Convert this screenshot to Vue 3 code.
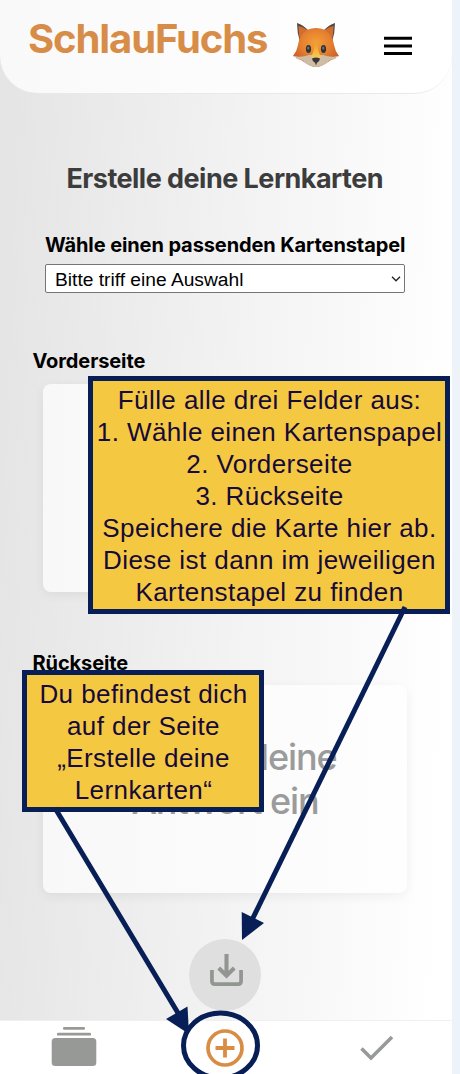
<script setup>
const saveSteps = [
  'Fülle alle drei Felder aus:',
  '1. Wähle einen Kartenspapel',
  '2. Vorderseite',
  '3. Rückseite',
  'Speichere die Karte hier ab.',
  'Diese ist dann im jeweiligen',
  'Kartenstapel zu finden'
]
const pageInfo = ['Du befindest dich', 'auf der Seite', '„Erstelle deine', 'Lernkarten“']
</script>

<template>
  <div class="screen">
    <div class="app">
      <header class="header">
        <span class="brand">SchlauFuchs</span>
        <svg class="fox" viewBox="0 0 48 46">
          <defs>
            <radialGradient id="fur" cx="50%" cy="38%" r="58%">
              <stop offset="0" stop-color="#f3a038" />
              <stop offset="0.55" stop-color="#e5802f" />
              <stop offset="1" stop-color="#cb5c29" />
            </radialGradient>
            <linearGradient id="snout" x1="0" y1="0" x2="0" y2="1">
              <stop offset="0" stop-color="#f29a30" />
              <stop offset="0.6" stop-color="#f5bd3e" />
              <stop offset="1" stop-color="#eed28c" />
            </linearGradient>
          </defs>
          <path d="M5 1Q10 2 17 9L8 20Q5 11 5 1ZM43 1Q38 2 31 9L40 20Q43 11 43 1Z" fill="#4d4b47" />
          <path d="M6.5 4Q12 5 18 10L9 21Q6.5 14 6.5 4ZM41.5 4Q36 5 30 10L39 21Q41.5 14 41.5 4Z" fill="#d26c2f" />
          <path d="M15 8Q24 4 33 8Q41 13 42 23Q43 29 47 34L43 35L44 36L39 38L36 40Q29 45 24 45Q19 45 12 40L9 38L4 36L5 35L1 34Q5 29 6 23Q7 13 15 8Z" fill="url(#fur)" />
          <path d="M1 34Q9 36 17 33H31Q39 36 47 34L44 35.5L43 37L38 38Q31 45 24 45Q17 45 10 38L5 37L4 35.5Z" fill="#cdbda6" />
          <path d="M23 21H25Q26 30 29 35Q26 38 24 38Q22 38 19 35Q22 30 23 21Z" fill="url(#snout)" />
          <ellipse cx="16.5" cy="27" rx="2.6" ry="4.1" fill="#2f3237" />
          <ellipse cx="31.5" cy="27" rx="2.6" ry="4.1" fill="#2f3237" />
          <ellipse cx="16.3" cy="26" rx="1.1" ry="1.6" fill="#64788a" />
          <ellipse cx="31.3" cy="26" rx="1.1" ry="1.6" fill="#64788a" />
          <path d="M20 36.5Q24 34.5 28 36.5Q28 39 24.7 41V42.5H23.3V41Q20 39 20 36.5Z" fill="#3c3531" />
        </svg>
        <svg class="menu" viewBox="0 0 28 20">
          <path d="M0 2.2H28M0 10H28M0 17.5H28" stroke="#000" stroke-width="3" />
        </svg>
      </header>

      <main class="content">
        <h1 class="title">Erstelle deine Lernkarten</h1>
        <label class="label stack-label">Wähle einen passenden Kartenstapel</label>
        <div class="select">
          <span>Bitte triff eine Auswahl</span>
          <svg viewBox="0 0 10 6"><path d="M1 .8L5 4.8L9 .8" fill="none" stroke="#222" stroke-width="1.3" /></svg>
        </div>
        <label class="label front-label">Vorderseite</label>
        <div class="card"></div>
        <label class="label back-label">Rückseite</label>
        <div class="card back">
          <span>Gib hier deine</span>
          <span>Antwort ein</span>
        </div>
        <button class="save">
          <svg viewBox="0 0 34 34">
            <path d="M2 16.5V28Q2 31 5 31H29Q32 31 32 28V16.5" fill="none" stroke="#919691" stroke-width="3.8" />
            <path d="M17 0V22M9 14.5L17 22.3L25 14.5" fill="none" stroke="#919691" stroke-width="4.2" />
          </svg>
        </button>
      </main>

      <nav class="nav">
        <svg class="deck" viewBox="0 0 46 40">
          <rect x="12" y="0" width="22" height="2.8" rx="1.2" fill="#999a97" />
          <rect x="6" y="5.8" width="34" height="2.8" rx="1.2" fill="#999a97" />
          <rect x=".7" y="11" width="44.6" height="28" rx="3.5" fill="#979996" />
        </svg>
        <svg class="plus" viewBox="0 0 38 38">
          <circle cx="19" cy="19" r="17" fill="none" stroke="#d98d44" stroke-width="3.7" />
          <path d="M19 9.5V28.5M9.5 19H28.5" stroke="#d98d44" stroke-width="3.8" />
        </svg>
        <svg class="check" viewBox="0 0 34 26">
          <path d="M1.5 13.5L11 23L32 2" fill="none" stroke="#979b97" stroke-width="3.6" />
        </svg>
      </nav>
    </div>

    <div class="note note-save">
      <div v-for="line in saveSteps" :key="line">{{ line }}</div>
    </div>
    <div class="note note-page">
      <div v-for="line in pageInfo" :key="line">{{ line }}</div>
    </div>

    <svg class="arrows" viewBox="0 0 460 1074">
      <g stroke="#071e56" stroke-width="5" fill="none">
        <path d="M405 607L250 924" />
        <path d="M55 808L178 1013" />
        <ellipse cx="220.5" cy="1045.5" rx="37" ry="32.5" />
      </g>
      <path d="M242 940L241.7 912L264 923Z" fill="#071e56" />
      <path d="M189 1034L166 1019L187.5 1006.5Z" fill="#071e56" />
    </svg>
  </div>
</template>

<style>
body { background: #edf3f8; }
</style>

<style scoped>
.screen {
  position: relative;
  width: 460px;
  height: 1074px;
  overflow: hidden;
  background: #edf3f8;
  font-family: Inter, "Liberation Sans", sans-serif;
}
.app {
  display: flex;
  flex-direction: column;
  width: 452px;
  height: 1074px;
  background: linear-gradient(92deg, #e5e5e5 3%, #fff 96%);
}
.header {
  box-sizing: border-box;
  flex: none;
  display: flex;
  align-items: flex-start;
  height: 94px;
  padding-left: 28px;
  border-bottom: 1px solid #e9e9e9;
  border-radius: 0 0 38px 38px;
  background: linear-gradient(90deg, #f9f9f9, #fff 85%);
}
.brand {
  width: 240px;
  margin-top: 15px;
  color: #d78d48;
  font-size: 40px;
  line-height: 48px;
  font-weight: 700;
  letter-spacing: -1.1px;
  white-space: nowrap;
}
.fox { width: 48px; height: 46px; margin: 22px 0 0 24px; }
.menu { width: 28px; height: 20px; margin: 36px 0 0 44px; }
.content {
  flex: 1;
  display: flex;
  flex-direction: column;
  align-items: flex-start;
  white-space: nowrap;
}
.title {
  margin: 68px 0 0 66.5px;
  color: #3c3c3c;
  font-size: 27px;
  line-height: 34px;
  font-weight: 700;
  letter-spacing: -0.53px;
}
.label { font-size: 20px; line-height: 24px; font-weight: 700; color: #000; letter-spacing: -0.1px; }
.stack-label { margin: 37px 0 0 45px; }
.select {
  box-sizing: border-box;
  display: flex;
  align-items: center;
  justify-content: space-between;
  width: 360px;
  height: 29px;
  margin: 7px 0 0 45px;
  padding: 2px 3px 0 9px;
  border: 1px solid #757575;
  border-radius: 2px;
  background: #fff;
  color: #000;
  font: 19.2px "Liberation Sans", sans-serif;
}
.select svg { width: 10px; height: 6px; margin-bottom: 2px; }
.front-label { margin: 56px 0 0 32.5px; }
.card {
  flex: none;
  width: 364px;
  height: 208px;
  margin: 11px 0 0 43px;
  border-radius: 8px;
  background: linear-gradient(90deg, #f8f8f8, #fefefe);
  box-shadow: 0 3px 12px rgba(0, 0, 0, 0.06);
}
.back-label { margin: 59px 0 0 32.5px; }
.back {
  box-sizing: border-box;
  display: flex;
  flex-direction: column;
  align-items: center;
  margin-top: 10px;
  padding-top: 50px;
  color: #9b9b9b;
  font-size: 36px;
  line-height: 44px;
  font-weight: 500;
  letter-spacing: -1.1px;
}
.save {
  display: flex;
  justify-content: center;
  width: 72px;
  height: 72px;
  margin: 46px 0 0 189px;
  padding: 15px 0 0 3px;
  border: 0;
  border-radius: 50%;
  background: #dfdfdf;
}
.save svg { width: 33px; height: 33px; }
.nav {
  box-sizing: border-box;
  flex: none;
  display: flex;
  height: 54px;
  border-top: 1px solid #f0f0f0;
  background: #fff;
}
.deck { width: 46px; height: 40px; margin: 6px 0 0 51px; }
.plus { width: 38px; height: 38px; margin: 8px 0 0 109px; }
.check { width: 34px; height: 26px; margin: 14px 0 0 116px; }
.note {
  position: absolute;
  box-sizing: border-box;
  border: 5px solid #071e56;
  background: #f5c842;
  color: #160a38;
  font: 26px/32px "Liberation Sans", sans-serif;
  letter-spacing: 0.43px;
  text-align: center;
  white-space: nowrap;
}
.note-save { left: 88px; top: 376px; width: 362px; height: 238px; padding: 3px 0 0 1px; }
.note-page { left: 22px; top: 670px; width: 242px; height: 142px; padding: 3px 0 0 1px; }
.arrows { position: absolute; left: 0; top: 0; width: 460px; height: 1074px; }
</style>
